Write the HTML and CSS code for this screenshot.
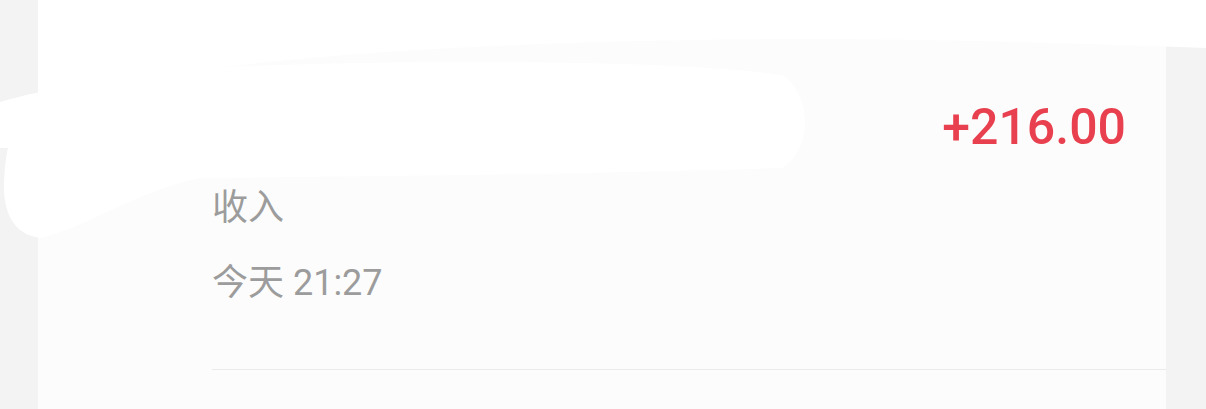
FILE: index.html
```html
<!DOCTYPE html>
<html lang="zh-CN">
<head>
    <meta charset="UTF-8">
    <meta name="viewport" content="width=device-width, initial-scale=1.0">
    <title>收支明细</title>
    <link rel="stylesheet" href="styles.css">
</head>
<body>
<div class="page">
    <div class="card">
        <div class="record">
            <div class="amount">+216.00</div>
            <div class="title">收入</div>
            <div class="time">今天 21:27</div>
            <div class="divider"></div>
        </div>
    </div>
</div>

<!-- hand-drawn white scribble covering part of the screenshot -->
<svg class="scribble" width="1206" height="409" viewBox="0 0 1206 409">
    <path d="M38 0 H1206 V48 C1000 40 800 36 600 42 C400 48 250 60 120 82 L38 96 Z"/>
    <path d="M0 102 C40 90 120 76 200 68 C400 58 700 60 785 76 C812 100 812 150 782 168 C600 174 400 176 200 178 C140 190 80 230 40 238 C14 234 5 214 4 190 C4 172 6 156 8 148 L0 148 Z"/>
</svg>
</body>
</html>
```

FILE: styles.css
```css
:root {
    --page-bg: #f3f3f3;
    --card-bg: #fcfcfc;
    --red: #e8404e;
    --grey-text: #9c9c9c;
    --line: #ebebeb;
}

* {
    margin: 0;
    padding: 0;
    box-sizing: border-box;
}

html, body {
    height: 100%;
}

body {
    font-family: Roboto, "Noto Sans CJK SC", sans-serif;
    background-color: var(--page-bg);
    overflow: hidden;
}

.page {
    height: 409px;
    padding: 0 40px 0 38px;
}

.card {
    height: 100%;
    background-color: var(--card-bg);
}

.record {
    padding-left: 174px;
    padding-top: 98px;
}

.amount {
    text-align: right;
    padding-right: 40px;
    font-size: 50px;
    font-weight: 500;
    line-height: 58px;
    color: var(--red);
}

.title,
.time {
    font-size: 36px;
    line-height: 42px;
    color: var(--grey-text);
}

.title {
    margin-top: 31px;
}

.time {
    margin-top: 33px;
}

.divider {
    margin-top: 65px;
    border-top: 1px solid var(--line);
}

.scribble {
    position: absolute;
    top: 0;
    left: 0;
    fill: #ffffff;
    pointer-events: none;
}
```
